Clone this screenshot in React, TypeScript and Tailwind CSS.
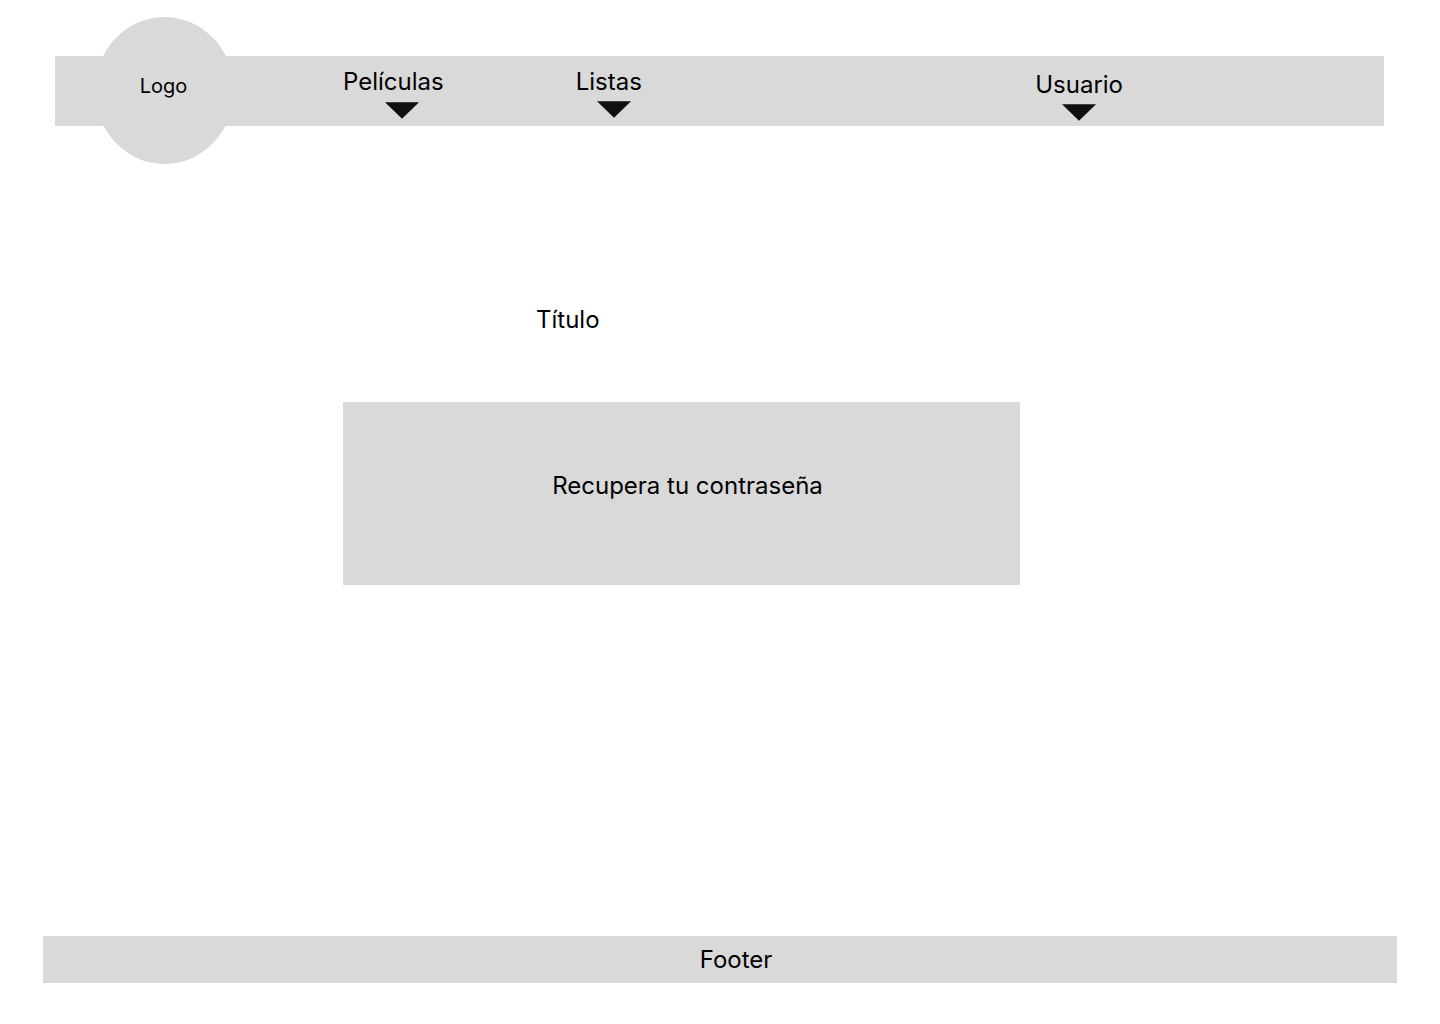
function Caret() {
  return (
    <svg className="h-[17px] w-[34px]" viewBox="0 0 34 17" aria-hidden="true">
      <path d="M0 0.3H34L17 16.8Z" fill="#0f0f0f" />
    </svg>
  );
}

export default function App() {
  return (
    <div className="flex min-h-screen flex-col bg-white font-['Inter',sans-serif] text-2xl leading-7 text-black">
      <header className="mt-14 mr-14 ml-[55px] flex h-[70px] items-start bg-[#d9d9d9]">
        <a
          href="#"
          className="-mt-[39px] ml-10 flex h-[147px] w-[139px] shrink-0 items-center justify-center rounded-[50%] bg-[#d9d9d9] pr-0.5 pb-2.5 text-xl leading-6"
        >
          Logo
        </a>
        <nav className="ml-[109px] flex flex-1 items-start self-stretch pt-3">
          <div className="flex flex-1 items-start gap-[132px]">
            <button type="button" className="flex flex-col items-center gap-1.5">
              <span>Películas</span>
              <span className="pl-[18px]">
                <Caret />
              </span>
            </button>
            <button type="button" className="flex flex-col items-center gap-[5px]">
              <span>Listas</span>
              <span className="pl-2.5">
                <Caret />
              </span>
            </button>
          </div>
          <button type="button" className="mt-[3px] mr-[261px] flex flex-col items-center gap-[5px]">
            <span>Usuario</span>
            <Caret />
          </button>
        </nav>
      </header>
      <main className="mr-[420px] ml-[343px] flex-1 pt-[180px]">
        <h1 className="pl-[193px]">Título</h1>
        <button type="button" className="mt-[68px] flex h-[183px] w-full items-center justify-center bg-[#d9d9d9] pb-4 pl-3">
          Recupera tu contraseña
        </button>
      </main>
      <footer className="mx-[43px] mb-[41px] flex h-[47px] items-center justify-center bg-[#d9d9d9] pl-8">
        Footer
      </footer>
    </div>
  );
}
